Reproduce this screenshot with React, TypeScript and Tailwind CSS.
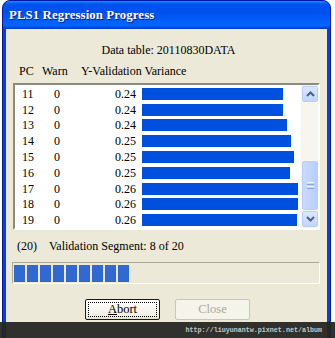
import React from "react";

const rows = [
  { pc: 11, v: "0.24", w: 141 },
  { pc: 12, v: "0.24", w: 141 },
  { pc: 13, v: "0.24", w: 145 },
  { pc: 14, v: "0.25", w: 149 },
  { pc: 15, v: "0.25", w: 152 },
  { pc: 16, v: "0.25", w: 148 },
  { pc: 17, v: "0.26", w: 156 },
  { pc: 18, v: "0.26", w: 156 },
  { pc: 19, v: "0.26", w: 155 },
];

const serif = { fontFamily: '"Liberation Serif", "Times New Roman", serif' };

function Arrow({ up }: { up?: boolean }) {
  return (
    <svg width="9" height="6" viewBox="0 0 9 6">
      <path
        d={up ? "M1 5 L4.5 1.5 L8 5" : "M1 1 L4.5 4.5 L8 1"}
        fill="none"
        stroke="#4d6185"
        strokeWidth="2"
      />
    </svg>
  );
}

export default function App() {
  return (
    <div className="relative w-[335px] h-[338px] overflow-hidden bg-white" style={serif}>
      <div className="ml-[2px] w-[329px] h-[345px] rounded-t-[8px] flex flex-col bg-[#0a3fd6] border border-[#0019a8]">
        {/* Title bar */}
        <div className="h-[28px] shrink-0 rounded-t-[7px] flex items-center pl-[6px] pt-[1px] bg-[linear-gradient(#0997ff,#0053ee_10%,#0050ee_40%,#0066ff_86%,#0058f0_92%,#003dd7_97%,#003dd7)]">
          <span className="text-white font-bold text-[12.8px] leading-none [text-shadow:1px_1px_0_#0a1e8c] tracking-[0.1px]">
            PLS1 Regression Progress
          </span>
        </div>
        {/* Client */}
        <div className="mx-[3px] flex-1 bg-[#ece9d8] flex flex-col text-[12px] text-black">
          <div className="pt-[14px] h-[29px] flex justify-center leading-[14px] pl-[4px]">
            Data table: 20110830DATA
          </div>
          <div className="flex leading-[14px] pl-[13px] mt-[6px] h-[19px]">
            <span className="w-[23px]">PC</span>
            <span className="w-[39px]">Warn</span>
            <span>Y-Validation Variance</span>
          </div>
          {/* List box */}
          <div className="ml-[7px] w-[307px] h-[147px] border-2 border-t-[#8c8a7e] border-l-[#8c8a7e] border-b-white border-r-white bg-white flex">
            <div className="flex-1 flex flex-col pt-[1px]">
              {rows.map((r) => (
                <div key={r.pc} className="h-[16px] flex items-center leading-none">
                  <span className="w-[39px] pl-[7px]">{r.pc}</span>
                  <span className="w-[30px]">0</span>
                  <span className="w-[52px] text-right">{r.v}</span>
                  <div className="ml-[6px] h-[12px] bg-[#0050e0]" style={{ width: r.w }} />
                </div>
              ))}
            </div>
            <div className="w-[17px] bg-[#f6f5ee] flex flex-col pl-[1px] py-[1px]">
              <div className="h-[16px] rounded-[2px] border border-[#b9cdf6] bg-[linear-gradient(#dce8ff,#c3d5fd)] flex items-center justify-center">
                <Arrow up />
              </div>
              <div className="flex-1 flex flex-col justify-end pb-[1px]">
                <div className="h-[49px] rounded-[2px] border border-[#b9cdf6] bg-[linear-gradient(90deg,#c9dafd,#b8cdfb)] flex flex-col items-center justify-center gap-[1px]">
                  <div className="w-[7px] h-[1px] bg-[#eef3ff]" />
                  <div className="w-[7px] h-[1px] bg-[#8ca6dd]" />
                  <div className="w-[7px] h-[1px] bg-[#eef3ff]" />
                  <div className="w-[7px] h-[1px] bg-[#8ca6dd]" />
                </div>
              </div>
              <div className="h-[16px] rounded-[2px] border border-[#b9cdf6] bg-[linear-gradient(#dce8ff,#c3d5fd)] flex items-center justify-center">
                <Arrow />
              </div>
            </div>
          </div>
          {/* Status */}
          <div className="flex leading-[14px] pl-[11px] mt-[9px] h-[14px]">
            <span className="w-[32px]">(20)</span>
            <span>Validation Segment: 8 of 20</span>
          </div>
          {/* Progress */}
          <div className="ml-[6px] mt-[9px] w-[308px] h-[22px] border border-[#aca899] border-b-white border-r-white bg-[#ece9d8] flex items-center pl-[1px] gap-[2px]">
            {Array.from({ length: 9 }).map((_, i) => (
              <div key={i} className="w-[11px] h-[17px] bg-[#3169d3]" />
            ))}
          </div>
          {/* Buttons */}
          <div className="flex mt-[15px] pl-[79px] gap-[15px]">
            <div className="w-[75px] h-[21px] rounded-[2px] border border-[#1a1a1a] bg-[linear-gradient(#ffffff,#f0efe6_80%,#e3e0d0)] p-[2px]">
              <div className="w-full h-full border border-dotted border-black flex items-center justify-center leading-none text-[12.5px]">
                <span><span className="underline">A</span>bort</span>
              </div>
            </div>
            <div className="w-[75px] h-[21px] rounded-[2px] border border-[#c9c7ba] bg-[#f5f4ea] flex items-center justify-center leading-none text-[12.5px] text-[#aca899]">
              Close
            </div>
          </div>
        </div>
      </div>
      {/* Watermark */}
      <div className="absolute left-0 top-[322px] w-[335px] h-[16px] bg-[#262623]/95 flex items-center justify-end pr-[13px]">
        <span className="text-[6.7px] font-bold text-[#c8c8c8]" style={{ fontFamily: '"Liberation Mono", monospace' }}>
          http://liuyunantw.pixnet.net/album
        </span>
      </div>
    </div>
  );
}
